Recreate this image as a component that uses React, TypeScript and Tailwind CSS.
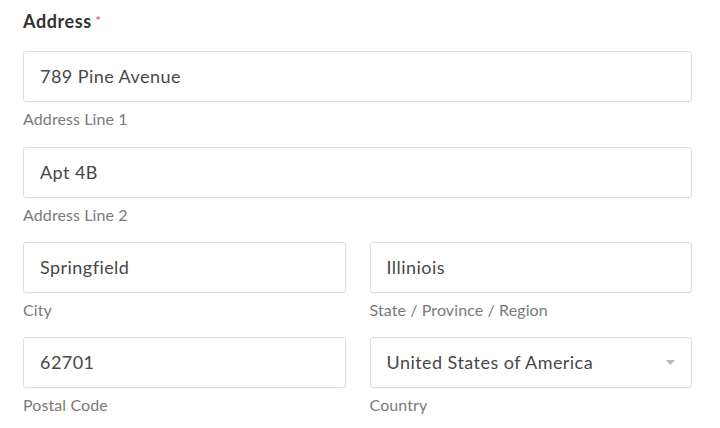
interface FieldProps {
  value: string;
  label: string;
  select?: boolean;
}

function Field({ value, label, select }: FieldProps) {
  return (
    <div className="flex flex-col">
      <div className="flex h-[51px] items-center justify-between rounded-[3px] border border-[#dedede] bg-white pl-[16px] pr-[16px] shadow-[0_1px_1px_rgba(0,0,0,0.04)]">
        <span className="text-[18px] tracking-[0.45px] text-[#474747]">{value}</span>
        {select && (
          <svg width="9" height="5" viewBox="0 0 9 5" className="text-[#b8b8b8]">
            <path d="M0 0h9L4.5 5z" fill="currentColor" />
          </svg>
        )}
      </div>
      <span className="mt-[7px] h-[37px] text-[16px] leading-[20px] tracking-[0.1px] text-[#7a7a7a]">{label}</span>
    </div>
  );
}

export default function App() {
  return (
    <div className="h-[428px] w-[720px] bg-white pl-[23px] pr-[28px] pt-[10px] font-['Lato',sans-serif]">
      <h3 className="flex items-start text-[18px] font-bold leading-[22px] tracking-[0.6px] text-[#333]">
        Address<span className="ml-[4px] text-[11px] text-[#e06060]">*</span>
      </h3>
      <div className="mt-[19px] flex flex-col">
        <Field value="789 Pine Avenue" label="Address Line 1" />
        <div className="mt-[1px] flex flex-col">
          <Field value="Apt 4B" label="Address Line 2" />
          <div className="grid grid-cols-2 gap-x-[24px]">
            <Field value="Springfield" label="City" />
            <Field value="Illiniois" label="State / Province / Region" />
            <Field value="62701" label="Postal Code" />
            <Field value="United States of America" label="Country" select />
          </div>
        </div>
      </div>
    </div>
  );
}
